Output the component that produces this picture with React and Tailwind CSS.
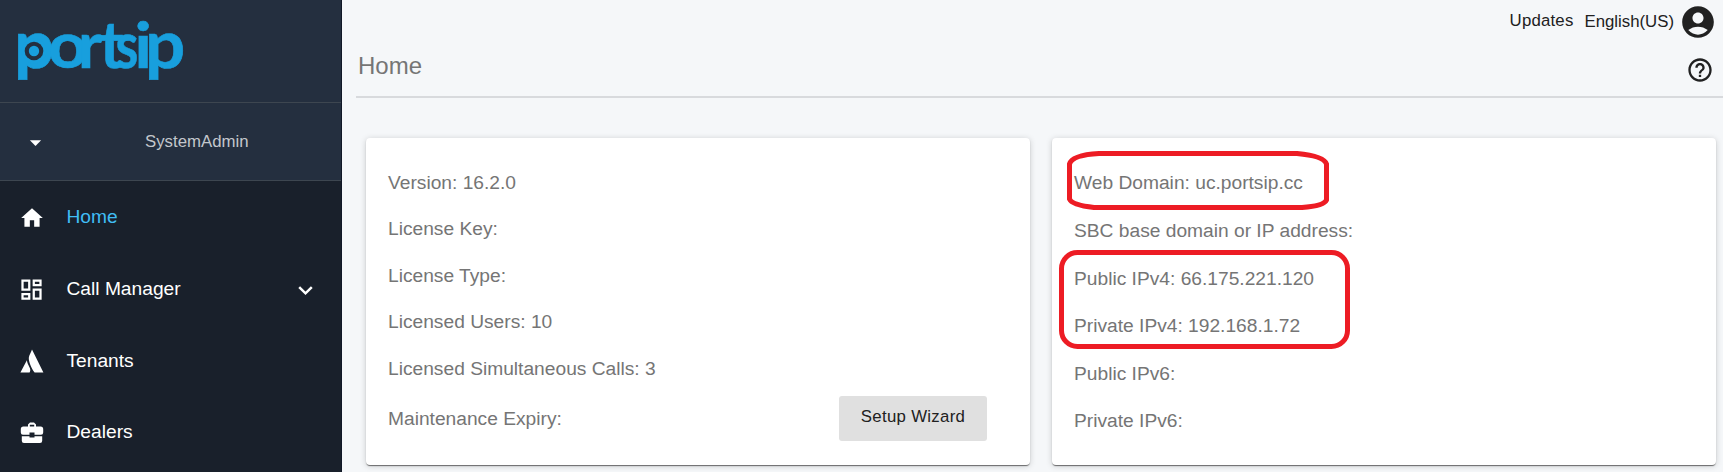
import React from "react";
import { MdHome, MdOutlineDashboard, MdAccountCircle, MdHelpOutline, MdArrowDropDown } from "react-icons/md";

function Logo() {
  return (
    <svg width="190" height="102" viewBox="0 0 190 102" className="block" aria-label="portsip">
      <g fill="#189fdd" stroke="#189fdd" strokeWidth="0.6" fontFamily="Lato, sans-serif" fontWeight="700" fontSize="65">
        <text transform="translate(14 67.8) scale(1.09 1.04)">p</text>
        <text transform="translate(48 67.5) scale(1.06 1.01)">o</text>
        <text transform="translate(78 67.5)">r</text>
        <text transform="translate(99.5 67.5)">t</text>
        <text transform="translate(115.5 67.5) scale(.8 1)">s</text>
        <text transform="translate(134.5 67.5) scale(1.05 .98)">i</text>
        <text transform="translate(145 67.8) scale(1.09 1.04)">p</text>
      </g>
      <circle cx="34" cy="51" r="12.5" fill="#189fdd" />
      <circle cx="34" cy="51" r="9.3" fill="#242f3f" />
      <circle cx="34" cy="51" r="5.2" fill="#189fdd" />
    </svg>
  );
}

function TenantIcon() {
  return (
    <svg width="24" height="24" viewBox="0 0 24 24" fill="#fff">
      <path d="M12 .4 L23.4 23.6 H14.6 C11.6 19.6 8.6 13.2 8.8 8.8 C9 6 11.2 3 12 .4 Z" />
      <path d="M6.9 11.2 C7.3 15.4 10.4 18.4 10.3 21 C10.3 22 9.6 23.6 9.6 23.6 H.4 Z" />
    </svg>
  );
}

function BriefcaseIcon() {
  return (
    <svg width="24" height="24" viewBox="0 0 24 24" fill="#fff">
      <path
        fillRule="evenodd"
        d="M10 1.6 H14 L16 3.6 V5.6 H20.6 Q23.2 5.6 23.2 8.2 V11.6 Q23.2 13.8 21 13.8 H14.5 V11.6 H9.5 V13.8 H3 Q.8 13.8 .8 11.6 V8.2 Q.8 5.6 3.4 5.6 H8 V3.6 Z M9.8 3.8 V5.6 H14.2 V3.8 Z"
      />
      <path d="M1.8 15.2 H9.5 V16.6 H14.5 V15.2 H22.2 V19.8 Q22.2 22 20 22 H4 Q1.8 22 1.8 19.8 Z" />
    </svg>
  );
}

function NavItem({ icon, label, active, expandable }) {
  return (
    <div className="flex h-[71.6px] shrink-0 items-center pl-[18px] pr-[22px]">
      <span className="flex w-[27px] justify-center text-white">{icon}</span>
      <span className={`ml-[21.5px] flex-1 text-[19.2px] ${active ? "text-[#40bdf5]" : "text-white"}`}>
        {label}
      </span>
      {expandable && (
        <svg width="27" height="27" viewBox="0 0 24 24" fill="none" stroke="#fff" strokeWidth="2.2">
          <path d="M6.4 9.8 L12 15.4 L17.6 9.8" />
        </svg>
      )}
    </div>
  );
}

const license = [
  "Version: 16.2.0",
  "License Key:",
  "License Type:",
  "Licensed Users: 10",
  "Licensed Simultaneous Calls: 3",
];
const network = [
  "Web Domain: uc.portsip.cc",
  "SBC base domain or IP address:",
  "Public IPv4: 66.175.221.120",
  "Private IPv4: 192.168.1.72",
  "Public IPv6:",
  "Private IPv6:",
];

const card =
  "relative h-[327px] rounded-[4px] bg-white px-[22px] text-[19.2px] text-[#757575] shadow-[0_2px_1px_-1px_rgba(0,0,0,0.35),0_1px_1px_0_rgba(0,0,0,0.26),0_1px_6px_0_rgba(0,0,0,0.18)]";

export default function App() {
  return (
    <div className="flex h-[472px] w-[1723px] overflow-hidden bg-[#f5f7f9] font-['Liberation_Sans',Arial,sans-serif]">
      <aside className="flex w-[342px] shrink-0 flex-col overflow-hidden border-r border-[#111827] bg-[#19202b]">
        <div className="h-[103px] shrink-0 border-b border-[#3d4650] bg-[#242f3f]">
          <Logo />
        </div>
        <div className="flex h-[78px] shrink-0 items-center border-b border-[#3d4650] bg-[#242f3f] pl-[22px]">
          <MdArrowDropDown size={27} className="mt-[2px] text-white" />
          <span className="ml-[96px] text-[16.8px] text-[#c3c7cc]">SystemAdmin</span>
        </div>
        <nav className="flex flex-col pt-[1px]">
          <NavItem icon={<MdHome size={26} />} label="Home" active />
          <NavItem icon={<MdOutlineDashboard size={27} />} label="Call Manager" expandable />
          <NavItem icon={<TenantIcon />} label="Tenants" />
          <NavItem icon={<BriefcaseIcon />} label="Dealers" />
        </nav>
      </aside>
      <main className="flex min-w-0 flex-1 flex-col pl-[14px]">
        <header className="flex h-[44px] shrink-0 items-center justify-end pr-[6px] text-[#212121]">
          <span className="mr-[11px] -mt-[3px] text-[16.8px] tracking-[0.2px]">Updates</span>
          <span className="mr-[5px] -mt-[1px] text-[16.8px]">English(US)</span>
          <MdAccountCircle size={38} />
        </header>
        <div className="flex h-[54px] shrink-0 items-center justify-between border-b-2 border-[#d8dadd] pr-[9px]">
          <h1 className="pb-[9px] pl-[2px] text-[24px] text-[#757575]">Home</h1>
          <MdHelpOutline size={28} className="text-[#212121]" />
        </div>
        <div className="flex gap-[22px] pl-[10px] pt-[40px]">
          <section className={`w-[664px] pt-[22px] ${card}`}>
            {license.map((row) => (
              <p key={row} className="flex h-[46.5px] items-center">{row}</p>
            ))}
            <div className="flex h-[51px] items-center justify-between pr-[21px]">
              <p className="pt-[3px]">Maintenance Expiry:</p>
              <button className="h-[45px] w-[148px] rounded-[3px] bg-[#e0e0e0] pb-[2px] text-[16.8px] tracking-[0.3px] text-[#212121]">
                Setup Wizard
              </button>
            </div>
          </section>
          <section className={`w-[664px] pt-[22px] ${card}`}>
            {network.map((row) => (
              <p key={row} className="flex h-[47.6px] items-center">{row}</p>
            ))}
            <svg className="absolute left-0 top-0" width="310" height="220" fill="none" stroke="#ed1c24" strokeWidth="5">
              <path d="M47 15.5 H245 Q272 18 274.5 26 V62 Q272 68 250 69.5 H42 Q20 67 17.5 61 V26 Q20 17 47 15.5 Z" />
              <rect x="9.5" y="114.5" width="286" height="94" rx="16" />
            </svg>
          </section>
        </div>
      </main>
    </div>
  );
}
